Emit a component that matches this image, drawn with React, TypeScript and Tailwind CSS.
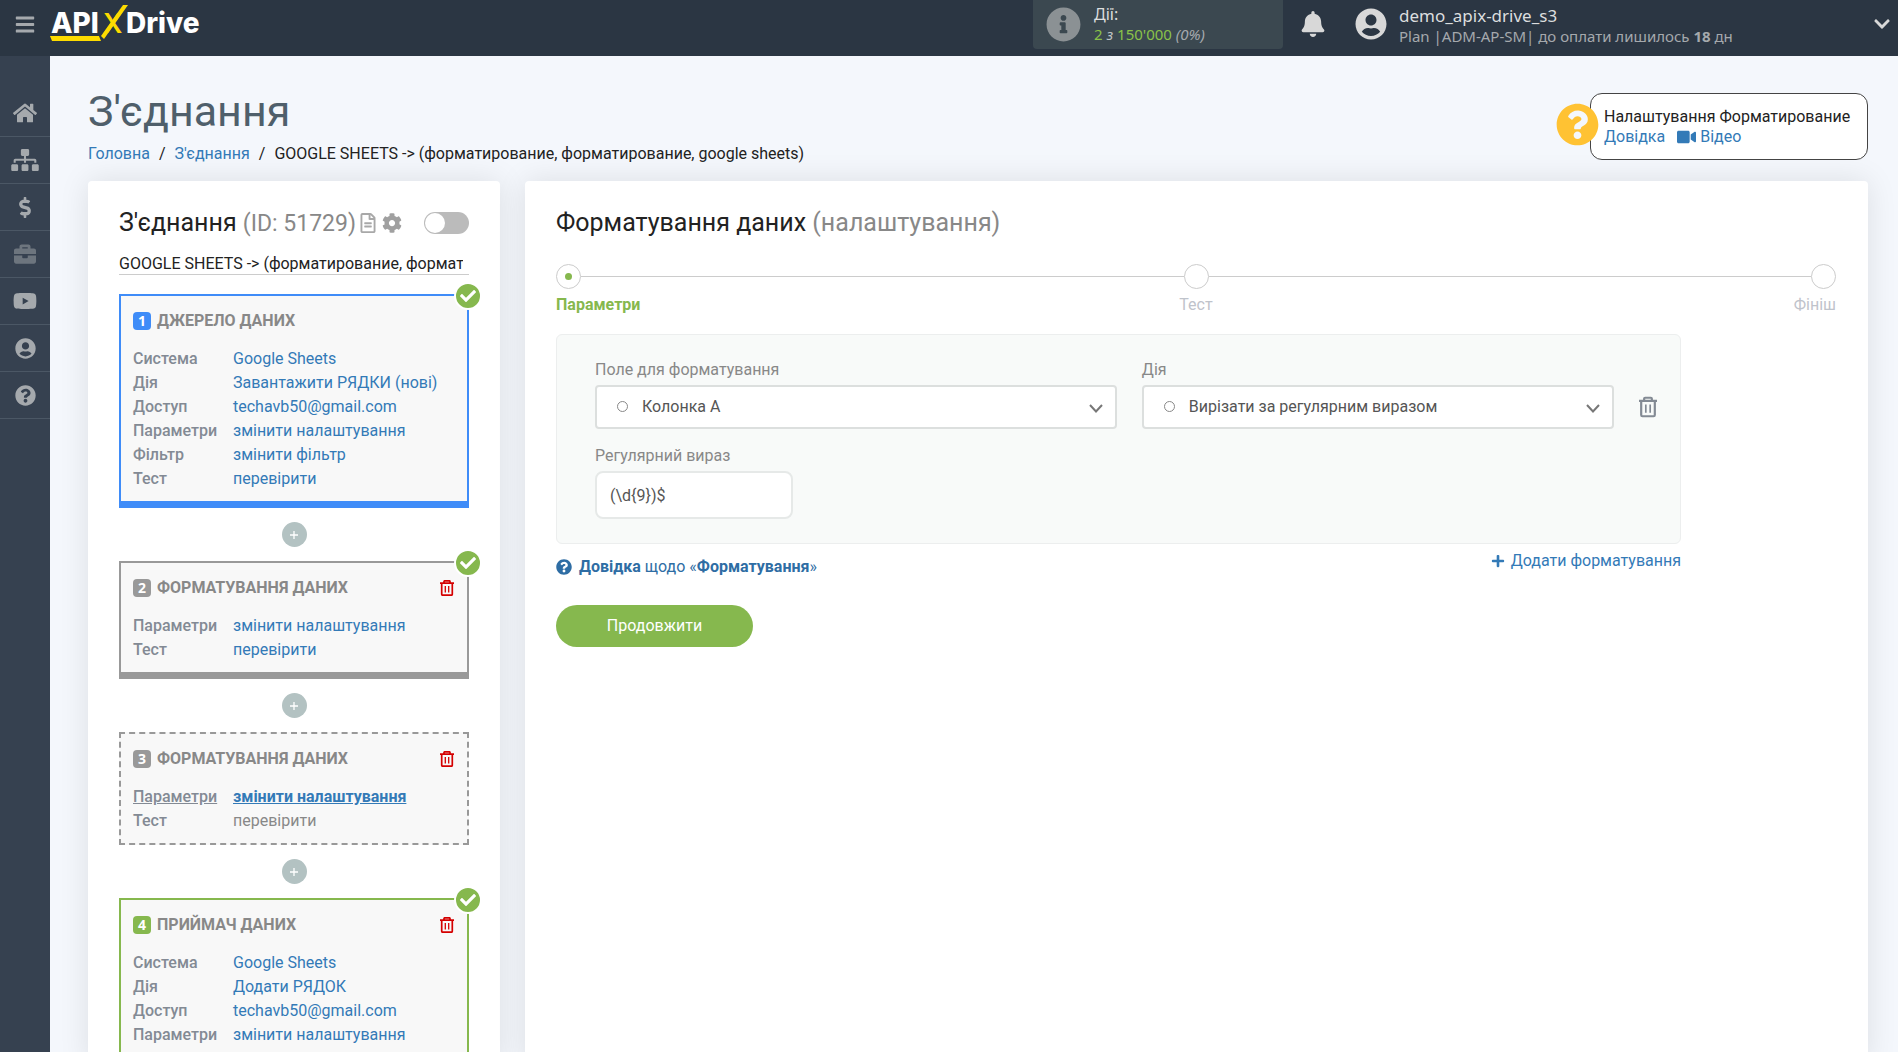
import { useState } from 'react';
import {
  FaBars,
  FaBell,
  FaBriefcase,
  FaCheck,
  FaChevronDown,
  FaCog,
  FaDollarSign,
  FaHome,
  FaInfoCircle,
  FaPlus,
  FaQuestionCircle,
  FaRegFileAlt,
  FaSitemap,
  FaUserCircle,
  FaVideo,
  FaYoutube,
} from 'react-icons/fa';

interface StepRow {
  label: string;
  value: string;
  state?: 'active' | 'disabled';
}

interface Step {
  id: number;
  title: string;
  color: 'blue' | 'gray' | 'dashed' | 'green';
  done: boolean;
  removable: boolean;
  rows: StepRow[];
}

const steps: Step[] = [
  {
    id: 1,
    title: 'ДЖЕРЕЛО ДАНИХ',
    color: 'blue',
    done: true,
    removable: false,
    rows: [
      { label: 'Система', value: 'Google Sheets' },
      { label: 'Дія', value: 'Завантажити РЯДКИ (нові)' },
      { label: 'Доступ', value: 'techavb50@gmail.com' },
      { label: 'Параметри', value: 'змінити налаштування' },
      { label: 'Фільтр', value: 'змінити фільтр' },
      { label: 'Тест', value: 'перевірити' },
    ],
  },
  {
    id: 2,
    title: 'ФОРМАТУВАННЯ ДАНИХ',
    color: 'gray',
    done: true,
    removable: true,
    rows: [
      { label: 'Параметри', value: 'змінити налаштування' },
      { label: 'Тест', value: 'перевірити' },
    ],
  },
  {
    id: 3,
    title: 'ФОРМАТУВАННЯ ДАНИХ',
    color: 'dashed',
    done: false,
    removable: true,
    rows: [
      { label: 'Параметри', value: 'змінити налаштування', state: 'active' },
      { label: 'Тест', value: 'перевірити', state: 'disabled' },
    ],
  },
  {
    id: 4,
    title: 'ПРИЙМАЧ ДАНИХ',
    color: 'green',
    done: true,
    removable: true,
    rows: [
      { label: 'Система', value: 'Google Sheets' },
      { label: 'Дія', value: 'Додати РЯДОК' },
      { label: 'Доступ', value: 'techavb50@gmail.com' },
      { label: 'Параметри', value: 'змінити налаштування' },
    ],
  },
];

const boxStyles = {
  blue: 'border-2 border-b-7 border-[#3f8cf8]',
  gray: 'border-2 border-b-7 border-[#999999]',
  dashed: 'border-2 border-dashed border-[#999999]',
  green: 'border-2 border-b-7 border-[#86b84e]',
};

const badgeStyles = {
  blue: 'bg-[#3f8cf8]',
  gray: 'bg-[#999999]',
  dashed: 'bg-[#999999]',
  green: 'bg-[#86b84e]',
};

const navItems = [
  { name: 'Головна', icon: <FaHome className="w-6 h-6" /> },
  { name: "З'єднання", icon: <FaSitemap className="w-7 h-[22px]" /> },
  { name: 'Оплата', icon: <FaDollarSign className="w-5 h-[21px]" /> },
  { name: 'Портфель', icon: <FaBriefcase className="w-[22px] h-[22px] opacity-50" /> },
  { name: 'Відео', icon: <FaYoutube className="w-6 h-6" /> },
  { name: 'Профіль', icon: <FaUserCircle className="w-[21px] h-[21px]" /> },
  { name: 'Допомога', icon: <FaQuestionCircle className="w-[21px] h-[21px]" /> },
];

function Logo() {
  return (
    <svg width="156" height="44" viewBox="0 0 156 44" className="font-['Inter',sans-serif]">
      <text x="1" y="33" fill="#fff" fontSize="28" fontWeight="800">API</text>
      <text x="53" y="33" fill="#fddb00" fontSize="27" fontWeight="600">X</text>
      <text x="76" y="33" fill="#fff" fontSize="28" fontWeight="800">Drive</text>
      {/* long stroke of the cross and the underline */}
      <path d="M73 5h5L54 39l-3-3z" fill="#fddb00" />
      <path d="M0 36h49l2 5H2z" fill="#fddb00" />
    </svg>
  );
}

function TrashIcon({ className }: { className: string }) {
  return (
    <svg viewBox="0 0 14 16" className={className} fill="none" stroke="currentColor" strokeWidth="1.7">
      <path d="M0 3.2h14M4 3V1.6Q4 .8 4.8 .8h4.4q.8 0 .8.8V3M1.7 3.2v11q0 1 1 1h8.6q1 0 1-1v-11" />
      <path d="M5.3 6v6.5M8.7 6v6.5" strokeWidth="1.3" />
    </svg>
  );
}

function Header() {
  return (
    <header className="flex h-14 shrink-0 items-start bg-[#2b3643] font-['Noto_Sans',sans-serif]">
      <button aria-label="Меню" className="flex h-12 w-[50px] items-center justify-center text-[#a5a9ad]">
        <FaBars className="h-[21px] w-5" />
      </button>
      <a href="#" aria-label="ApiX-Drive">
        <Logo />
      </a>

      <div className="ml-auto flex h-[49px] w-[250px] items-center gap-[13px] rounded-b bg-[#3b4850] pl-[13px]">
        <FaInfoCircle className="h-[35px] w-[35px] text-[#8b9194]" />
        <div className="pb-[2px] text-[15px] leading-5">
          <div className="text-base leading-5 text-[#dcdedf]">Дії:</div>
          <div className="text-[#8ac249]">
            2 <i className="text-[#bfc3c6]">з</i> 150'000 <i className="text-[#a5a9ad]">(0%)</i>
          </div>
        </div>
      </div>

      <button aria-label="Сповіщення" className="ml-[18px] flex h-12 w-6 items-center justify-center text-[#d8d8d8]">
        <FaBell className="h-[26px] w-6" />
      </button>

      <div className="ml-[30px] flex h-12 w-[543px] items-center pr-[7px] text-[#d8d8d8]">
        <FaUserCircle className="h-8 w-8" />
        <div className="ml-3 pt-1">
          <div className="text-[17px] leading-5 text-[#dcdedf]">demo_apix-drive_s3</div>
          <div className="text-[15px] leading-5 text-[#a5a9ad]">
            Plan |ADM-AP-SM| до оплати лишилось <b>18</b> дн
          </div>
        </div>
        <button aria-label="Відкрити меню" className="ml-auto">
          <FaChevronDown className="h-[18px] w-[18px]" />
        </button>
      </div>
    </header>
  );
}

function Sidebar() {
  return (
    <nav className="w-[50px] shrink-0 bg-[#364150] pt-[34px]">
      {navItems.map((item) => (
        <a
          key={item.name}
          href="#"
          aria-label={item.name}
          className="flex h-[47px] items-center justify-center border-b border-[#4b5765] text-[#a5a9ad]"
        >
          {item.icon}
        </a>
      ))}
    </nav>
  );
}

function StepBox({ step }: { step: Step }) {
  return (
    <section className={`relative bg-[#f8f8f8] pt-[13px] pr-[13px] pb-[10px] pl-3 ${boxStyles[step.color]}`}>
      {step.done && (
        <span className="absolute -top-[14px] -right-[15px] flex h-7 w-7 items-center justify-center rounded-full border-2 border-white bg-[#86b84e] text-white">
          <FaCheck className="h-4 w-4" />
        </span>
      )}

      <div className="mb-[14px] flex h-6 items-center">
        <span
          className={`mr-[6px] flex h-[18px] w-[18px] items-center justify-center rounded-sm font-['Open_Sans',sans-serif] text-sm font-bold text-white ${badgeStyles[step.color]}`}
        >
          {step.id}
        </span>
        <h3 className="font-bold text-[#888888]">{step.title}</h3>
        {step.removable && (
          <button aria-label="Видалити" className="ml-auto text-[#d40000]">
            <TrashIcon className="h-4 w-[14px]" />
          </button>
        )}
      </div>

      <dl className="grid grid-cols-[100px_1fr]">
        {step.rows.map((row) => (
          <div key={row.label} className="contents">
            <dt className={`font-medium text-[#838a94] ${row.state === 'active' ? 'underline' : ''}`}>{row.label}</dt>
            <dd>
              {row.state === 'disabled' ? (
                <span className="text-[#888888]">{row.value}</span>
              ) : (
                <a href="#" className={`text-[#337ab7] ${row.state === 'active' ? 'font-bold underline' : ''}`}>
                  {row.value}
                </a>
              )}
            </dd>
          </div>
        ))}
      </dl>
    </section>
  );
}

function ConnectionCard() {
  const [enabled, setEnabled] = useState(false);
  const [name, setName] = useState('GOOGLE SHEETS -> (форматирование, форматирование, google sheets)');

  return (
    <aside className="w-[412px] shrink-0 rounded bg-white px-[31px] pt-[26px] shadow-[0_0_30px_rgba(0,0,0,0.1)]">
      <div className="flex h-8 items-center">
        <h2 className="text-[25px] leading-8 text-[#222222]">
          З'єднання <span className="text-[23px] text-[#888888]">(ID: 51729)</span>
        </h2>
        <FaRegFileAlt className="ml-1 h-5 w-4 text-[#a8a8a8]" />
        <FaCog className="ml-[6px] h-5 w-5 text-[#a0a0a0]" />
        <label className="relative ml-auto h-[22px] w-[45px] cursor-pointer">
          <input
            type="checkbox"
            aria-label="Увімкнути з'єднання"
            checked={enabled}
            onChange={(e) => setEnabled(e.target.checked)}
            className="peer absolute inset-0 h-[22px] w-[45px] appearance-none rounded-full bg-[#bbbbbb] checked:bg-[#86b84e]"
          />
          <span className="pointer-events-none absolute top-px left-px h-5 w-5 rounded-full bg-white peer-checked:left-6" />
        </label>
      </div>

      <input
        type="text"
        aria-label="Назва з'єднання"
        value={name}
        onChange={(e) => setName(e.target.value)}
        className="mt-[14px] mb-[19px] block h-[22px] w-full border-b border-[#cccccc] pr-[6px] text-[#222222]"
      />

      {steps.map((step) => (
        <div key={step.id}>
          {step.id > 1 && (
            <button
              aria-label="Додати крок"
              className="mx-auto my-[14px] flex h-[25px] w-[25px] items-center justify-center rounded-full bg-[#b3c2c2] text-white"
            >
              <svg viewBox="0 0 8 8" className="h-2 w-2" stroke="currentColor" strokeWidth="1.3">
                <path d="M4 0v8M0 4h8" />
              </svg>
            </button>
          )}
          <StepBox step={step} />
        </div>
      ))}
    </aside>
  );
}

function Stepper() {
  return (
    <div className="mt-[25px]">
      <div className="flex items-center">
        <span className="flex h-[25px] w-[25px] items-center justify-center rounded-full border border-[#cccccc]">
          <span className="h-[7px] w-[7px] rounded-full bg-[#86b84e]" />
        </span>
        <span className="h-px flex-1 bg-[#cccccc]" />
        <span className="h-[25px] w-[25px] rounded-full border border-[#cccccc]" />
        <span className="h-px flex-1 bg-[#cccccc]" />
        <span className="h-[25px] w-[25px] rounded-full border border-[#cccccc]" />
      </div>
      <div className="mt-1 grid grid-cols-3 text-[#bfc3cb]">
        <b className="text-[#86b84e]">Параметри</b>
        <span className="text-center">Тест</span>
        <span className="text-right">Фініш</span>
      </div>
    </div>
  );
}

function SelectField({ id, label, value }: { id: string; label: string; value: string }) {
  return (
    <div>
      <label htmlFor={id} className="block text-[#888888]">{label}</label>
      <div className="relative mt-[3px]">
        <select
          id={id}
          className="h-11 w-full appearance-none rounded border-2 border-[#dcdfde] bg-white pl-[45px] text-[#555555]"
        >
          <option>{value}</option>
        </select>
        <span className="pointer-events-none absolute top-4 left-[22px] h-[11px] w-[11px] rounded-full border border-[#888888]" />
        <svg
          viewBox="0 0 14 9"
          className="pointer-events-none absolute top-[19px] right-[14px] h-[9px] w-[14px]"
          fill="none"
          stroke="#777"
          strokeWidth="2"
        >
          <path d="M1 1l6 6.5L13 1" />
        </svg>
      </div>
    </div>
  );
}

function FormatCard() {
  const [regex, setRegex] = useState('(\\d{9})$');

  return (
    <section className="flex-1 rounded bg-white pt-[26px] pr-8 pl-[31px] shadow-[0_0_30px_rgba(0,0,0,0.1)]">
      <h2 className="text-[25px] leading-8 text-[#222222]">
        Форматування даних <span className="text-[#888888]">(налаштування)</span>
      </h2>

      <Stepper />

      <div className="mr-[155px]">
        <div className="mt-[17px] rounded-md border border-[#eceeee] bg-[#f8faf9] pt-[23px] pb-6 pl-[38px]">
          <div className="grid grid-cols-[21fr_19fr_41px] gap-x-[25px]">
            <SelectField id="field" label="Поле для форматування" value="Колонка А" />
            <SelectField id="action" label="Дія" value="Вирізати за регулярним виразом" />
            <button aria-label="Видалити форматування" className="mt-[38px] h-[22px] text-[#838a94]">
              <TrashIcon className="h-[22px] w-[18px]" />
            </button>
          </div>
          <label htmlFor="regex" className="mt-[15px] block text-[#888888]">Регулярний вираз</label>
          <input
            id="regex"
            type="text"
            value={regex}
            onChange={(e) => setRegex(e.target.value)}
            className="mt-[3px] block h-12 w-[198px] rounded-lg border-2 border-[#e6e9e8] bg-white px-[13px] text-[#555555]"
          />
        </div>

        <div className="mt-[5px] flex items-start justify-between">
          <a href="#" className="mt-[6px] flex items-center text-[#2e6da4]">
            <FaQuestionCircle className="mr-[7px] h-4 w-4" />
            <span>
              <b>Довідка</b> щодо «<b>Форматування</b>»
            </span>
          </a>
          <button className="flex items-center text-[#337ab7]">
            <FaPlus className="mr-[6px] h-[14px] w-[14px]" />
            Додати форматування
          </button>
        </div>

        <button className="mt-[26px] h-[42px] w-[197px] rounded-full bg-[#86b84e] text-white">
          Продовжити
        </button>
      </div>
    </section>
  );
}

function HelpBox() {
  return (
    <div className="relative mt-[37px] h-[67px] w-[278px] rounded-xl border border-[#444444] bg-white pt-[13px] pl-[13px] leading-5">
      <FaQuestionCircle className="absolute top-[9px] -left-[35px] h-[43px] w-[43px] text-[#ffc233]" />
      <div className="text-[#222222]">Налаштування Форматирование</div>
      <div className="flex items-center text-[#337ab7]">
        <a href="#">Довідка</a>
        <a href="#" className="ml-3 flex items-center">
          <FaVideo className="mr-1 h-[18px] w-[19px]" />
          Відео
        </a>
      </div>
    </div>
  );
}

export default function App() {
  return (
    <div className="flex h-screen flex-col overflow-hidden bg-[#f4f7fc] font-['Roboto',sans-serif] text-base">
      <Header />
      <div className="flex min-h-0 flex-1">
        <Sidebar />
        <main className="min-w-0 flex-1 pr-[30px] pl-[38px]">
          <div className="flex h-[125px] items-start justify-between">
            <div>
              <h1 className="mt-[30px] text-[43px] leading-[50px] text-[#4f5f6b]">З'єднання</h1>
              <div className="mt-[6px] flex gap-[9px] text-[#222222]">
                <a href="#" className="text-[#337ab7]">Головна</a>
                <span>/</span>
                <a href="#" className="text-[#337ab7]">З'єднання</a>
                <span>/</span>
                <span>GOOGLE SHEETS -&gt; (форматирование, форматирование, google sheets)</span>
              </div>
            </div>
            <HelpBox />
          </div>
          <div className="flex gap-[25px]">
            <ConnectionCard />
            <FormatCard />
          </div>
        </main>
      </div>
    </div>
  );
}
